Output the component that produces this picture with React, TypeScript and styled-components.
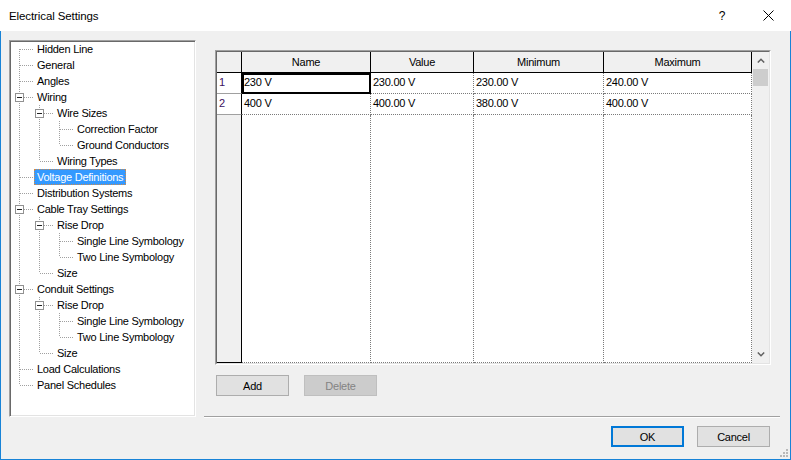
import React from 'react';
import styled, { createGlobalStyle } from 'styled-components';

const Global = createGlobalStyle`
  html, body { margin: 0; padding: 0; width: 791px; height: 460px; overflow: hidden; background: #fff; }
  * { box-sizing: border-box; }
  body { font-family: "Liberation Sans", Arial, sans-serif; font-size: 11px; letter-spacing: -0.25px; color: #000; }
`;

const Window = styled.div`
  width: 791px;
  height: 460px;
  display: flex;
  flex-direction: column;
  background: #fff;
`;

const TitleBar = styled.div`
  height: 31px;
  display: flex;
  align-items: center;
  padding-left: 9px;
  background: #fff;
  flex: none;
`;

const TitleText = styled.div`
  font-size: 11.5px;
  letter-spacing: -0.1px;
  flex: 1;
`;

const CaptionButton = styled.div`
  width: 46px;
  height: 31px;
  display: flex;
  align-items: center;
  justify-content: center;
  font-size: 12px;
`;

const Body = styled.div`
  position: relative;
  flex: 1;
  background: #f0f0f0;
  border: 1px solid #1883d7;
  border-top: none;
  display: flex;
  flex-direction: column;
  padding: 9px 10px 0 8px;
`;

const MainRow = styled.div`
  display: flex;
  gap: 8px;
  height: 377px;
`;

const TreeBox = styled.div`
  width: 187px;
  height: 377px;
  background: #fff;
  border: 1px solid;
  border-color: #a0a0a0 #fff #fff #a0a0a0;
  box-shadow: inset 1px 1px 0 #696969, inset -1px -1px 0 #e3e3e3;
  display: flex;
  flex-direction: column;
`;

const TreeRow = styled.div`
  display: flex;
  height: 16px;
  align-items: center;
`;

const TreeLabel = styled.div<{ $selected?: boolean }>`
  height: 16px;
  line-height: 16px;
  padding: 0 3px;
  white-space: nowrap;
  background: ${p => (p.$selected ? '#3399ff' : 'transparent')};
  color: ${p => (p.$selected ? '#fff' : '#000')};
  outline: ${p => (p.$selected ? '1px dotted #d08a4a' : 'none')};
  outline-offset: -1px;
`;

const RightPanel = styled.div`
  flex: 1;
  height: 377px;
  border-bottom: 1px solid #a0a0a0;
  box-shadow: 0 1px 0 #fff;
  padding: 10px 0 0 11px;
  display: flex;
  flex-direction: column;
`;

const GridFrame = styled.div`
  width: 556px;
  height: 315px;
  border: 1px solid;
  border-color: #a0a0a0 #fff #fff #a0a0a0;
`;

const GridInner = styled.div`
  width: 100%;
  height: 100%;
  border: 1px solid;
  border-color: #696969 #e3e3e3 #e3e3e3 #696969;
  display: flex;
`;

const TableArea = styled.div`
  width: 535px;
  display: flex;
  flex-direction: column;
  background: #fff;
`;

const COLS = '25px 129px 103px 130px 148px';

const HeaderRow = styled.div`
  display: grid;
  grid-template-columns: ${COLS};
  height: 21px;
  flex: none;
`;

const HeaderCell = styled.div`
  background: #f0f0f0;
  border-right: 1px solid #000;
  border-bottom: 1px solid #000;
  display: flex;
  align-items: center;
  justify-content: center;
  padding-bottom: 1px;
`;

const DataRow = styled.div<{ $fill?: boolean }>`
  display: grid;
  grid-template-columns: ${COLS};
  height: ${p => (p.$fill ? 'auto' : '21px')};
  flex: ${p => (p.$fill ? '1' : 'none')};
`;

const RowHeader = styled.div<{ $fill?: boolean }>`
  background: ${p => (p.$fill ? '#f0f0f0' : '#fff')};
  border-right: 1px solid #000;
  border-bottom: 1px solid ${p => (p.$fill ? '#000' : '#a0a0a0')};
  display: flex;
  align-items: center;
  padding: 0 0 2px 2px;
  color: #3b1060;
`;

const Cell = styled.div<{ $current?: boolean }>`
  border-right: 1px dotted #7a7a7a;
  border-bottom: 1px dotted #7a7a7a;
  display: flex;
  align-items: center;
  padding: 0 0 2px 2px;
  white-space: nowrap;
  outline: ${p => (p.$current ? '2px solid #000' : 'none')};
  outline-offset: -2px;
`;

const ScrollBar = styled.div`
  width: 17px;
  background: #f0f0f0;
  display: flex;
  flex-direction: column;
`;

const ScrollArrow = styled.div`
  height: 17px;
  display: flex;
  align-items: center;
  justify-content: center;
  flex: none;
`;

const ScrollTrack = styled.div`
  flex: 1;
  display: flex;
  flex-direction: column;
`;

const Thumb = styled.div`
  width: 15px;
  height: 17px;
  margin-left: 1px;
  background: #cdcdcd;
`;

const ButtonRow = styled.div`
  display: flex;
  gap: 15px;
  margin-top: 10px;
  padding-left: 1px;
`;

const Button = styled.div<{ $disabled?: boolean; $default?: boolean }>`
  width: 73px;
  height: 21px;
  display: flex;
  align-items: center;
  justify-content: center;
  background: ${p => (p.$disabled ? '#cccccc' : '#e1e1e1')};
  border: ${p => (p.$default ? '2px solid #0078d7' : p.$disabled ? '1px solid #bfbfbf' : '1px solid #adadad')};
  color: ${p => (p.$disabled ? '#838383' : '#000')};
`;

const Footer = styled.div`
  display: flex;
  justify-content: flex-end;
  gap: 13px;
  padding-top: 9px;
  padding-right: 10px;
`;

const Grip = styled.svg`
  position: absolute;
  right: 1px;
  bottom: 1px;
`;

type Node = { label: string; children?: Node[]; selected?: boolean };

const tree: Node[] = [
  { label: 'Hidden Line' },
  { label: 'General' },
  { label: 'Angles' },
  {
    label: 'Wiring',
    children: [
      { label: 'Wire Sizes', children: [{ label: 'Correction Factor' }, { label: 'Ground Conductors' }] },
      { label: 'Wiring Types' },
    ],
  },
  { label: 'Voltage Definitions', selected: true },
  { label: 'Distribution Systems' },
  {
    label: 'Cable Tray Settings',
    children: [
      { label: 'Rise Drop', children: [{ label: 'Single Line Symbology' }, { label: 'Two Line Symbology' }] },
      { label: 'Size' },
    ],
  },
  {
    label: 'Conduit Settings',
    children: [
      { label: 'Rise Drop', children: [{ label: 'Single Line Symbology' }, { label: 'Two Line Symbology' }] },
      { label: 'Size' },
    ],
  },
  { label: 'Load Calculations' },
  { label: 'Panel Schedules' },
];

type Flat = {
  label: string;
  guides: boolean[];
  first: boolean;
  last: boolean;
  hasChildren: boolean;
  selected?: boolean;
};

function flatten(nodes: Node[], depth: number, guides: boolean[], out: Flat[]) {
  nodes.forEach((n, i) => {
    const last = i === nodes.length - 1;
    out.push({
      label: n.label,
      guides,
      first: depth === 0 && i === 0,
      last,
      hasChildren: !!n.children,
      selected: n.selected,
    });
    if (n.children) flatten(n.children, depth + 1, [...guides, !last], out);
  });
}

const DOT = '#a0a0a0';

const Guide = ({ on }: { on: boolean }) => (
  <svg width="20" height="16" style={{ flex: 'none' }} shapeRendering="crispEdges">
    {on && <line x1="9.5" y1="0" x2="9.5" y2="16" stroke={DOT} strokeDasharray="1 1" />}
  </svg>
);

const Connector = ({ f }: { f: Flat }) => (
  <svg width="24" height="16" style={{ flex: 'none' }} shapeRendering="crispEdges">
    {!f.first && <line x1="9.5" y1="0" x2="9.5" y2={f.hasChildren ? 4 : 8} stroke={DOT} strokeDasharray="1 1" />}
    {!f.last && <line x1="9.5" y1={f.hasChildren ? 14 : 8} x2="9.5" y2="16" stroke={DOT} strokeDasharray="1 1" />}
    <line x1={f.hasChildren ? 14 : 10} y1="8.5" x2="24" y2="8.5" stroke={DOT} strokeDasharray="1 1" />
    {f.hasChildren && (
      <>
        <rect x="5.5" y="4.5" width="8" height="8" fill="#fff" stroke="#919191" />
        <line x1="7" y1="8.5" x2="12" y2="8.5" stroke="#222" />
      </>
    )}
  </svg>
);

const flat: Flat[] = [];
flatten(tree, 0, [], flat);

const rows = [
  ['230 V', '230.00 V', '230.00 V', '240.00 V'],
  ['400 V', '400.00 V', '380.00 V', '400.00 V'],
];

export default function App() {
  return (
    <>
      <Global />
      <Window>
        <TitleBar>
          <TitleText>Electrical Settings</TitleText>
          <CaptionButton>?</CaptionButton>
          <CaptionButton>
            <svg width="11" height="11" shapeRendering="geometricPrecision">
              <line x1="0.5" y1="0.5" x2="10.5" y2="10.5" stroke="#000" strokeWidth="1" />
              <line x1="10.5" y1="0.5" x2="0.5" y2="10.5" stroke="#000" strokeWidth="1" />
            </svg>
          </CaptionButton>
        </TitleBar>
        <Body>
          <MainRow>
            <TreeBox>
              {flat.map((f, i) => (
                <TreeRow key={i}>
                  {f.guides.map((g, j) => (
                    <Guide key={j} on={g} />
                  ))}
                  <Connector f={f} />
                  <TreeLabel $selected={f.selected}>{f.label}</TreeLabel>
                </TreeRow>
              ))}
            </TreeBox>
            <RightPanel>
              <GridFrame>
                <GridInner>
                  <TableArea>
                    <HeaderRow>
                      <HeaderCell />
                      <HeaderCell>Name</HeaderCell>
                      <HeaderCell>Value</HeaderCell>
                      <HeaderCell>Minimum</HeaderCell>
                      <HeaderCell>Maximum</HeaderCell>
                    </HeaderRow>
                    {rows.map((r, i) => (
                      <DataRow key={i}>
                        <RowHeader>{i + 1}</RowHeader>
                        {r.map((c, j) => (
                          <Cell key={j} $current={i === 0 && j === 0}>
                            {c}
                          </Cell>
                        ))}
                      </DataRow>
                    ))}
                    <DataRow $fill>
                      <RowHeader $fill />
                      <Cell />
                      <Cell />
                      <Cell />
                      <Cell />
                    </DataRow>
                  </TableArea>
                  <ScrollBar>
                    <ScrollArrow>
                      <svg width="8" height="5">
                        <polyline points="0.8,4.5 4,1.3 7.2,4.5" fill="none" stroke="#606060" strokeWidth="1.5" />
                      </svg>
                    </ScrollArrow>
                    <ScrollTrack>
                      <Thumb />
                    </ScrollTrack>
                    <ScrollArrow>
                      <svg width="8" height="5">
                        <polyline points="0.8,0.5 4,3.7 7.2,0.5" fill="none" stroke="#606060" strokeWidth="1.5" />
                      </svg>
                    </ScrollArrow>
                  </ScrollBar>
                </GridInner>
              </GridFrame>
              <ButtonRow>
                <Button>Add</Button>
                <Button $disabled>Delete</Button>
              </ButtonRow>
            </RightPanel>
          </MainRow>
          <Footer>
            <Button $default>OK</Button>
            <Button>Cancel</Button>
          </Footer>
          <Grip width="10" height="10">
            <rect x="7" y="1" width="2" height="2" fill="#b8b8b8" />
            <rect x="4" y="4" width="2" height="2" fill="#b8b8b8" />
            <rect x="7" y="4" width="2" height="2" fill="#b8b8b8" />
            <rect x="1" y="7" width="2" height="2" fill="#b8b8b8" />
            <rect x="4" y="7" width="2" height="2" fill="#b8b8b8" />
            <rect x="7" y="7" width="2" height="2" fill="#b8b8b8" />
          </Grip>
        </Body>
      </Window>
    </>
  );
}
